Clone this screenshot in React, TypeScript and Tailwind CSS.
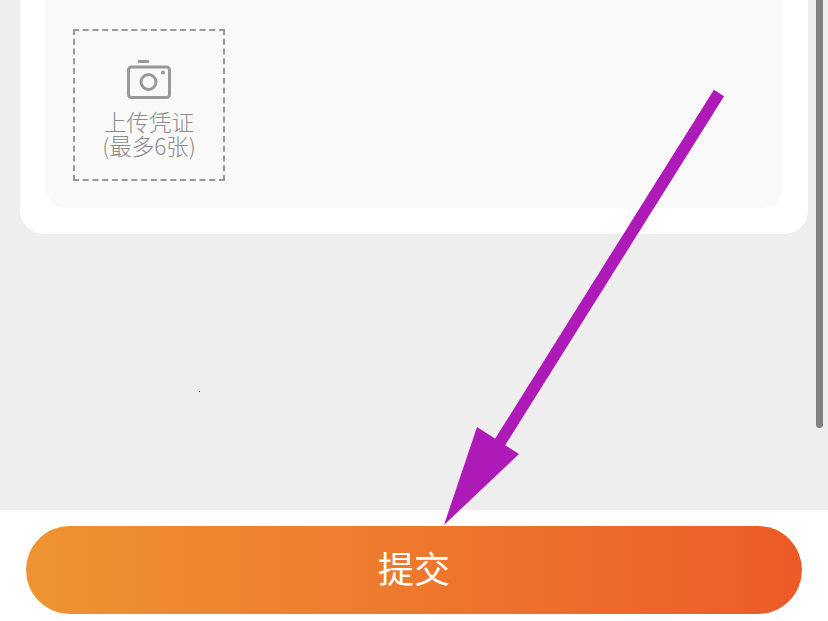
export default function App() {
  return (
    <div className="relative h-[621px] w-[828px] overflow-hidden bg-[#eeeeee] flex flex-col font-['Noto_Sans_CJK_SC','Noto_Sans',sans-serif]">
      {/* Card cut off by the top of the screen */}
      <div className="mx-5 h-[234px] rounded-b-[24px] bg-white px-[26px] pb-[26px]">
        <div className="h-full rounded-b-[20px] bg-[#f9f9f9] pt-[29px] pl-[27px]">
          <div className="flex h-[152px] w-[152px] flex-col items-center border-2 border-dashed border-[#999999] pt-[29px]">
            <svg width="44" height="39" viewBox="0 0 44 39" fill="none" stroke="#999999" strokeWidth="3">
              <rect x="1.5" y="7" width="41" height="30.5" rx="3" />
              <circle cx="21.5" cy="22" r="7.5" />
              <path d="M11 1.5h11" />
              <circle cx="36" cy="12.5" r="2" fill="#999999" stroke="none" />
            </svg>
            <p className="mt-[10px] whitespace-nowrap text-center text-[22.5px] leading-6 font-light text-[#8c8c8c]">
              上传凭证
              <br />
              (最多6张)
            </p>
          </div>
        </div>
      </div>

      <div className="flex-1" />

      {/* Submit bar */}
      <div className="h-[111px] bg-white px-[26px] pt-4">
        <button className="flex h-[88px] w-full items-center justify-center rounded-[44px] bg-gradient-to-r from-[#ee9332] to-[#ec5a27] pb-[6px] text-[36px] text-white">
          提交
        </button>
      </div>

      {/* Scrollbar */}
      <div className="absolute right-[5px] top-0 h-[428px] w-[7px] rounded-b-sm bg-[#808080]" />

      {/* Stray dot */}
      <div className="absolute left-[199px] top-[391px] h-px w-px bg-[#444444]" />

      {/* Annotation arrow */}
      <svg className="absolute inset-0" width="828" height="621" viewBox="0 0 828 621" fill="none">
        <path d="M719 93 L497 447" stroke="#ae1ab8" strokeWidth="12" />
        <path d="M444 525 L477 427 L519 454 Z" fill="#ae1ab8" />
      </svg>
    </div>
  )
}
